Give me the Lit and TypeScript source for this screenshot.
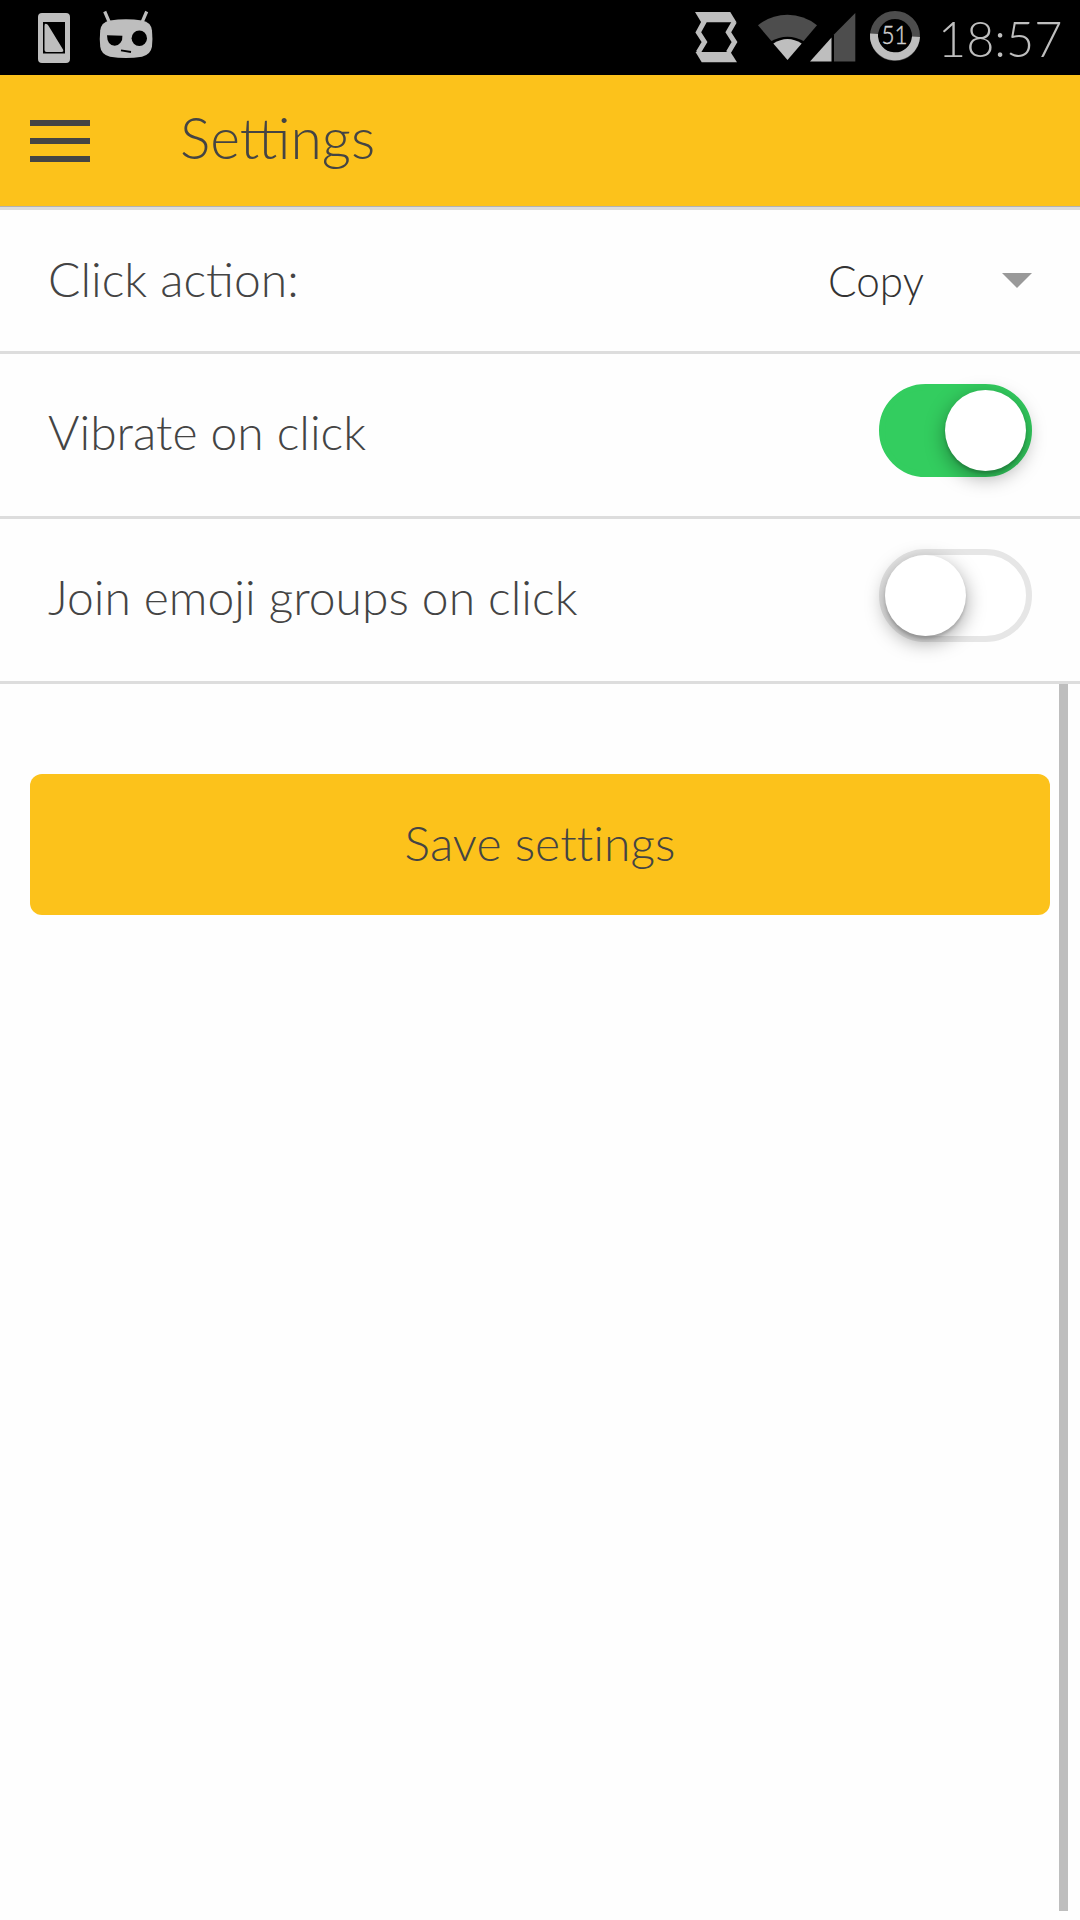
import { LitElement, html, css } from "lit";
import { customElement, property, state } from "lit/decorators.js";
import { classMap } from "lit/directives/class-map.js";

@customElement("status-bar")
class StatusBar extends LitElement {
  static styles = css`
    :host { display: block; height: 75px; background: #000; }
    .bar { display: flex; justify-content: space-between; height: 75px; }
    .icons { display: block; }
    .right { display: flex; }
    .clock {
      width: 142px;
      padding-top: 8px;
      box-sizing: border-box;
      font: 300 48.600px/60px Lato, sans-serif;
      color: #bebebe;
      white-space: nowrap;
    }
    .level { font: 300 26px Lato, sans-serif; fill: #d0d0d0; stroke: #d0d0d0; stroke-width: 0.5px; }
  `;

  render() {
    return html`
      <div class="bar">
        <svg class="icons" width="180" height="75" viewBox="0 0 180 75">
          <path fill="#bebebe" fill-rule="evenodd" d="M42 13h24q4 0 4 4v42q0 4-4 4H42q-4 0-4-4V17q0-4 4-4zM43 22v31.500h22V22z"/>
          <path fill="#bebebe" d="M44.500 26q0-3 2-2 1 0 2 1.800L63 49.500q1 2.500-1.500 2.500h-15q-2 0-2-2z"/>
          <path stroke="#bebebe" stroke-width="3.200" fill="none" d="M104.700 11.500l4.300 10M146.700 11.500l-4.300 10"/>
          <path fill="#bebebe" d="M110 20.500q16-2.500 32 0 9 1.500 10 10 .8 8 0 16-1.200 8-10 10.200-16 2.800-32 0-9-2.200-9.800-10.200-.8-8 0-16 1-8.500 9.800-10z"/>
          <path fill="#000" d="M107 35.300l15.400.5a7.700 9 0 0 1-7.700 10q-7.500-.3-7.700-10.500z"/>
          <circle cx="139.300" cy="38.300" r="7.700"/>
          <path stroke="#000" stroke-width="1.800" d="M121 50.300l10 1.700"/>
        </svg>
        <div class="right">
          <svg class="icons" width="258" height="75" viewBox="680 0 258 75">
            <path fill="#bebebe" d="M695 12h35.300l6.200 10.300h-35.300z"/>
            <path fill="#bebebe" d="M701.500 52h29l6.500 10.300h-35.300l-6.200-10.300z"/>
            <path fill="none" stroke="#bebebe" stroke-width="5" d="M704.500 21l-6.200 11.300 6.200 9.700-6.300 10.500M734.500 21.500l-6.200 10.800 6.200 9.700-6.200 10.500"/>
            <path fill="#4d4d4d" d="M758 25.300q13-10.500 29.500-10.500t29.500 10.500L787.500 60z"/>
            <path fill="#000" d="M770.500 41.500q17-9.500 34 0L787.500 62z"/>
            <path fill="#bebebe" d="M773.300 43.500q14.200-9 28.400 0L787.500 60z"/>
            <path fill="#bebebe" d="M810 61.500l21.500-24v24z"/>
            <path fill="#4d4d4d" d="M834 61.500v-27L855.300 13v48.500z"/>
            <circle cx="895" cy="36" r="21" fill="none" stroke="#4d4d4d" stroke-width="8"/>
            <path d="M874 33.800a21 21 0 1 0 42 3" fill="none" stroke="#bebebe" stroke-width="8"/>
            <text class="level" x="881.500" y="44.300" textLength="26" lengthAdjust="spacingAndGlyphs">51</text>
          </svg>
          <div class="clock">18:57</div>
        </div>
      </div>
    `;
  }
}

@customElement("toggle-switch")
class ToggleSwitch extends LitElement {
  @property({ type: Boolean }) on = false;

  static styles = css`
    :host { display: block; }
    .track {
      display: flex;
      box-sizing: border-box;
      width: 153px;
      height: 93px;
      border: 6px solid #e6e6e6;
      border-radius: 60px;
      background: #fff;
    }
    .track.on { justify-content: flex-end; border-color: #33cd5f; background: #33cd5f; }
    .handle {
      width: 81px;
      height: 81px;
      border-radius: 50%;
      background: #fff;
      box-shadow: 0 6px 20px rgba(0, 0, 0, 0.37), 0 3px 3px rgba(0, 0, 0, 0.15);
    }
  `;

  render() {
    return html`<div class=${classMap({ track: true, on: this.on })}><div class="handle"></div></div>`;
  }
}

@customElement("app-root")
class AppRoot extends LitElement {
  @state() private vibrate = true;
  @state() private join = false;

  static styles = css`
    :host { display: block; }
    .screen {
      position: relative;
      display: flex;
      flex-direction: column;
      height: 1920px;
      overflow: hidden;
      background: #fefefe;
      color: #444;
      font: 300 48px/58px Lato, sans-serif;
    }
    .header {
      display: flex;
      box-sizing: border-box;
      height: 132px;
      padding: 0 30px;
      gap: 90px;
      background: #fcc21b;
      border-bottom: 1px solid #b2b2b2;
    }
    .menu { display: flex; flex-direction: column; gap: 12px; padding-top: 45px; }
    .menu-line { width: 60px; height: 6px; background: #444; }
    .title { padding-top: 28px; font-size: 57px; line-height: 68px; white-space: nowrap; }
    .list { border-top: 3px solid #ddd; }
    .row {
      display: flex;
      justify-content: space-between;
      align-items: flex-start;
      box-sizing: border-box;
      height: 165px;
      padding: 30px 48px 0 48px;
      border-bottom: 3px solid #ddd;
    }
    .row.select { height: 144px; }
    .label { padding-top: 19px; white-space: nowrap; }
    .select .label { padding-top: 10px; }
    .choice { display: flex; align-items: flex-start; }
    .value { width: 174px; padding-top: 16px; font-size: 42.300px; line-height: 50px; color: #333; }
    .arrow {
      margin-top: 33px;
      border-top: 15px solid #999;
      border-left: 15px solid transparent;
      border-right: 15px solid transparent;
    }
    .actions { padding: 90px 30px 0; }
    .save {
      display: flex;
      justify-content: center;
      box-sizing: border-box;
      height: 141px;
      padding-top: 40px;
      border-radius: 12px;
      background: #fcc21b;
      font-variant-ligatures: none;
      letter-spacing: 0.080px;
    }
    .scrollbar {
      position: absolute;
      top: 684px;
      right: 12px;
      bottom: 9px;
      width: 9px;
      background: #bebebe;
    }
  `;

  render() {
    return html`
      <div class="screen">
        <status-bar></status-bar>
        <div class="header">
          <div class="menu">
            <div class="menu-line"></div>
            <div class="menu-line"></div>
            <div class="menu-line"></div>
          </div>
          <div class="title">Settings</div>
        </div>
        <div class="list">
          <div class="row select">
            <div class="label">Click action:</div>
            <div class="choice">
              <div class="value">Copy</div>
              <div class="arrow"></div>
            </div>
          </div>
          <div class="row">
            <div class="label">Vibrate on click</div>
            <toggle-switch .on=${this.vibrate} @click=${() => (this.vibrate = !this.vibrate)}></toggle-switch>
          </div>
          <div class="row">
            <div class="label">Join emoji groups on click</div>
            <toggle-switch .on=${this.join} @click=${() => (this.join = !this.join)}></toggle-switch>
          </div>
        </div>
        <div class="actions"><div class="save">Save settings</div></div>
        <div class="scrollbar"></div>
      </div>
    `;
  }
}
